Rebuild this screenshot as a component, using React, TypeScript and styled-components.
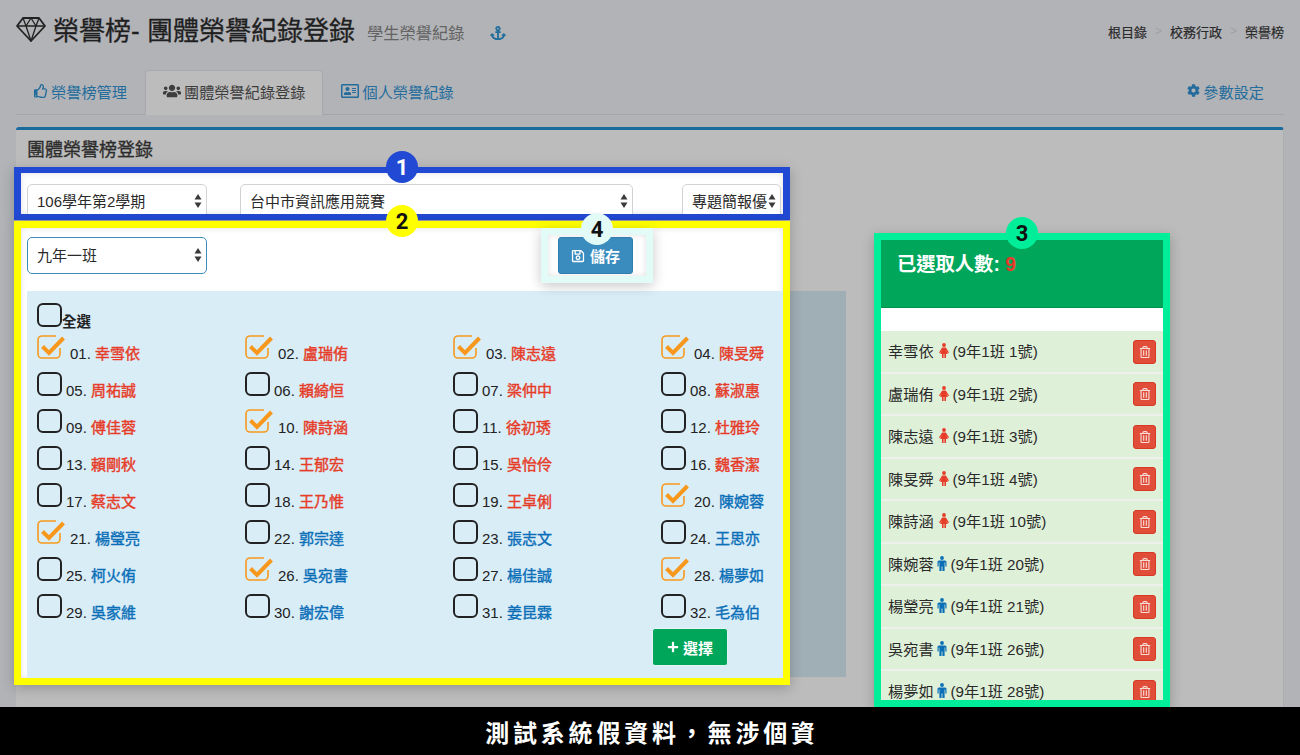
import React from 'react';
import styled, { createGlobalStyle } from 'styled-components';
import {
  FaAnchor,
  FaCog,
  FaPlus,
  FaRegAddressCard,
  FaRegSave,
  FaRegThumbsUp,
  FaRegTrashAlt,
  FaUsers,
} from 'react-icons/fa';

const FONT = '"Liberation Sans", "Noto Sans CJK TC", sans-serif';

const GlobalStyle = createGlobalStyle`
  html, body {
    margin: 0;
    padding: 0;
    height: 755px;
    overflow: hidden;
    background: #b2b3b7;
    font-family: ${FONT};
  }
`;

const Page = styled.div`
  position: relative;
  width: 1300px;
  height: 755px;
  overflow: hidden;
  padding: 0 16px;
  box-sizing: border-box;
`;

const Header = styled.header`
  display: flex;
  align-items: center;
  height: 60px;
`;

const Gem = styled.svg`
  flex: none;
  width: 30px;
  height: 26px;
  margin: -2px 7px 0 0;
`;

const Title = styled.h1`
  margin: -3px 0 0;
  font-size: 26px;
  font-weight: 400;
  color: #1f1f1f;
  white-space: nowrap;
  -webkit-text-stroke: 0.3px #1f1f1f;
`;

const Subtitle = styled.span`
  margin: 4px 0 0 12px;
  font-size: 16.3px;
  color: #636363;
`;

const Anchor = styled(FaAnchor)`
  width: 16px;
  height: 16px;
  margin: 6px 0 0 25px;
  color: #1f6e9c;
`;

const Breadcrumb = styled.nav`
  margin-left: auto;
  display: flex;
  align-items: center;
  font-size: 13px;
  color: #2a2a2a;
  gap: 8px;
  margin-top: 2px;
`;

const Crumb = styled.span`
  -webkit-text-stroke: 0.2px #2a2a2a;
`;

const Sep = styled.span`
  color: #a0a0a2;
  font-size: 12px;
`;

const Tabs = styled.nav`
  display: flex;
  align-items: flex-end;
  height: 55px;
  border-bottom: 1px solid #a3a4a7;
  box-sizing: border-box;
`;

const Tab = styled.div<{ $active?: boolean; $right?: boolean }>`
  display: flex;
  align-items: center;
  gap: 3px;
  height: 45px;
  box-sizing: border-box;
  padding: 0 ${(p) => (p.$right ? 19 : 17)}px 4px 17px;
  margin-bottom: -1px;
  font-size: 15.2px;
  color: ${(p) => (p.$active ? '#3d3d3d' : '#236c9c')};
  background: ${(p) => (p.$active ? '#bcbcbc' : 'transparent')};
  border: 1px solid ${(p) => (p.$active ? '#a8a9ac' : 'transparent')};
  border-bottom-color: ${(p) => (p.$active ? '#bcbcbc' : 'transparent')};
  border-radius: 4px 4px 0 0;
  margin-left: ${(p) => (p.$right ? 'auto' : '0')};
`;

const Box = styled.section`
  margin-top: 12px;
  height: 640px;
  background: #bcbcbc;
  border-top: 3px solid #1b6a9c;
  border-right: 1px solid #adaeb1;
  border-radius: 3px 3px 0 0;
`;

const BoxTitle = styled.h3`
  margin: 0;
  height: 37px;
  padding-left: 11px;
  line-height: 41px;
  font-size: 18px;
  font-weight: 400;
  color: #2c2c2c;
  -webkit-text-stroke: 0.3px #2c2c2c;
`;

const Body = styled.div`
  display: flex;
  align-items: flex-start;
  margin-left: -2px;
`;

const LeftColumn = styled.div`
  width: 776px;
  flex: none;
`;

const Highlight = styled.div<{ $color: string }>`
  position: relative;
  box-sizing: border-box;
  border: 7px solid ${(p) => p.$color};
  background: #fff;
  box-shadow: 0 3px 12px rgba(0, 0, 0, 0.22), inset 0 0 6px rgba(0, 0, 0, 0.12);
`;

const Badge = styled.span<{ $bg: string; $fg: string; $top?: number }>`
  position: absolute;
  top: ${(p) => p.$top ?? -23}px;
  left: 50%;
  width: 32px;
  height: 32px;
  margin-left: -16px;
  border-radius: 50%;
  background: ${(p) => p.$bg};
  color: ${(p) => p.$fg};
  display: flex;
  align-items: center;
  justify-content: center;
  font-family: "Roboto", ${FONT};
  font-size: 22px;
  font-weight: 700;
  z-index: 3;
`;

const FilterSection = styled(Highlight)`
  height: 53px;
  border-bottom-width: 6px;
  border-top-width: 6px;
`;

const FilterClip = styled.div`
  height: 41px;
  overflow: hidden;
  padding: 11px 0 0 6px;
  box-sizing: border-box;
  display: flex;
  gap: 33px;
`;

const SelectBox = styled.div<{ $width: number; $focus?: boolean; $gap?: number }>`
  display: flex;
  align-items: center;
  flex: none;
  width: ${(p) => p.$width}px;
  height: 37px;
  margin-right: ${(p) => p.$gap ?? 0}px;
  box-sizing: border-box;
  padding: 0 4px 2px 9px;
  background: #fff;
  border: 1px solid ${(p) => (p.$focus ? '#3c8dbc' : '#d2d2d6')};
  border-radius: 5px;
  font-size: 15px;
  color: #2a2a2a;
`;

const FilterSelect = styled(SelectBox)`
  padding-bottom: 4px;
`;

const SelectLabel = styled.span`
  flex: 1;
  overflow: hidden;
  white-space: nowrap;
`;

const Arrows = () => (
  <svg width="8" height="16" viewBox="0 0 8 16" style={{ flex: 'none' }}>
    <path d="M4 1 L7.5 6.5 H0.5 Z M4 15 L7.5 9.5 H0.5 Z" fill="#3a3a3a" />
  </svg>
);

const ClassSection = styled(Highlight)`
  margin-top: 1px;
  height: 464px;
`;

const Toolbar = styled.div`
  display: flex;
  align-items: flex-start;
  height: 63px;
  padding-left: 6px;
`;

const ClassSelect = styled(SelectBox)`
  margin-top: 9px;
`;

const SaveHighlight = styled(Highlight)`
  margin-left: 334px;
  width: 112px;
  height: 55px;
  padding: 2px 0 0 10px;
  z-index: 2;
`;

const SaveButton = styled.div`
  display: flex;
  align-items: center;
  justify-content: center;
  gap: 5px;
  width: 75px;
  height: 37px;
  background: #3a8cbf;
  border: 1px solid #2f7eae;
  border-radius: 3px;
  box-sizing: border-box;
  color: #fff;
  font-size: 15px;
  font-weight: 700;
`;

const Roster = styled.div`
  height: 387px;
  box-sizing: border-box;
  margin-left: 6px;
  padding: 12px 0 0 10px;
  background: #d9edf7;
`;

const AllRow = styled.div`
  display: flex;
  height: 32px;
  font-size: 14.5px;
  font-weight: 700;
  color: #222;
`;

const AllLabel = styled.span`
  margin: 10px 0 0 0;
  line-height: 18px;
`;

const RosterGrid = styled.div`
  display: grid;
  grid-template-columns: repeat(4, 208px);
  grid-auto-rows: 37px;
`;

const Cell = styled.div`
  display: flex;
  align-items: flex-start;
  white-space: nowrap;
  font-size: 15px;
  color: #222;
`;

const CellText = styled.span`
  margin: 10px 0 0 4px;
  line-height: 18px;
`;

const Name = styled.span<{ $tone: string }>`
  color: ${(p) => p.$tone};
  -webkit-text-stroke: 0.4px ${(p) => p.$tone};
`;

const PickRow = styled.div`
  margin-top: -3px;
  padding-left: 615px;
`;

const PickButton = styled.div`
  display: flex;
  align-items: center;
  justify-content: center;
  gap: 4px;
  width: 76px;
  height: 38px;
  background: #00a65a;
  border: 1px solid #e4f4f4;
  border-radius: 3px;
  box-sizing: border-box;
  color: #fff;
  font-size: 15px;
  font-weight: 700;
`;

const PanelTail = styled.div`
  flex: none;
  width: 56px;
  height: 386px;
  margin-top: 124px;
  background: #a0aeb6;
`;

const SelectedSection = styled(Highlight)`
  flex: none;
  width: 296px;
  height: 474px;
  margin: 66px 0 0 28px;
`;

const SelectedHead = styled.div`
  height: 68px;
  box-sizing: border-box;
  padding: 12px 16px 0;
  background: #00a65a;
  border-bottom: 1px solid #00924f;
  color: #fff;
  font-size: 19.3px;
  font-weight: 700;
  line-height: 26px;
`;

const Count = styled.span`
  color: #e8392b;
`;

const Spacer = styled.div`
  height: 23px;
  background: #fff;
`;

const SelectedList = styled.div`
  height: 369px;
  overflow: hidden;
`;

const SelectedRow = styled.div`
  display: flex;
  align-items: center;
  height: 40.5px;
  padding: 0 7px;
  background: #dff0d8;
  border-bottom: 2px solid #eef0ec;
  font-size: 15.2px;
  color: #2a2a2a;
`;

const RowText = styled.span`
  display: flex;
  align-items: center;
  margin-top: -2px;
  white-space: pre;
`;

const Figure = styled.svg<{ $female: boolean }>`
  flex: none;
  width: 10px;
  height: 15px;
  margin: 1px 4px 0 ${(p) => (p.$female ? 5 : 3)}px;
`;

const GenderIcon = ({ female }: { female: boolean }) => (
  <Figure viewBox="0 0 10 15" fill={female ? RED : BLUE} $female={female}>
    <circle cx="5" cy="2" r="1.9" />
    {female ? (
      <path d="M3.2 4.4 H6.8 L10 9.4 L9 10.2 L7 7.2 L8.8 11 H7 V15 H5.4 V11 H4.6 V15 H3 V11 H1.2 L3 7.2 L1 10.2 L0 9.4 Z" />
    ) : (
      <path d="M2 4.4 H8 A1.5 1.5 0 0 1 9.5 6 V10.5 H8.3 V6.6 H7.6 V15 H5.4 V10.5 H4.6 V15 H2.4 V6.6 H1.7 V10.5 H0.5 V6 A1.5 1.5 0 0 1 2 4.4 Z" />
    )}
  </Figure>
);

const TrashButton = styled.div`
  margin: 1px 0 0 auto;
  width: 23px;
  height: 24px;
  display: flex;
  align-items: center;
  justify-content: center;
  background: #e04e39;
  border: 1px solid #d73925;
  border-radius: 3px;
  box-sizing: border-box;
  color: #f8dcd8;
  font-size: 12px;
`;

const Notice = styled.div`
  position: absolute;
  left: 0;
  right: 0;
  bottom: 0;
  height: 48px;
  padding-left: 4px;
  background: #000;
  color: #fff;
  display: flex;
  align-items: center;
  justify-content: center;
  font-size: 24px;
  font-weight: 700;
  letter-spacing: 3.8px;
  z-index: 5;
`;

const CheckMark = ({ checked }: { checked: boolean }) =>
  checked ? (
    <svg width="29" height="24" viewBox="0 0 29 24" style={{ flex: 'none' }}>
      <path
        d="M19 1 H5 a4 4 0 0 0 -4 4 V19 a4 4 0 0 0 4 4 H19 a4 4 0 0 0 4 -4 V13"
        fill="none"
        stroke="#f7981d"
        strokeWidth="1.6"
      />
      <path d="M5.5 11.5 L12 18 L26.5 3" fill="none" stroke="#f7981d" strokeWidth="4" />
    </svg>
  ) : (
    <svg width="25" height="24" viewBox="0 0 25 24" style={{ flex: 'none' }}>
      <rect x="1" y="1" width="23" height="22" rx="5" fill="none" stroke="#222" strokeWidth="2" />
    </svg>
  );

const students = [
  '幸雪依', '盧瑞侑', '陳志遠', '陳旻舜', '周祐誠', '賴綺恒', '梁仲中', '蘇淑惠',
  '傅佳蓉', '陳詩涵', '徐初琇', '杜雅玲', '賴剛秋', '王郁宏', '吳怡伶', '魏香潔',
  '蔡志文', '王乃惟', '王卓俐', '陳婉蓉', '楊瑩亮', '郭宗達', '張志文', '王思亦',
  '柯火侑', '吳宛書', '楊佳誠', '楊夢如', '吳家維', '謝宏偉', '姜昆霖', '毛為伯',
];

const picked = [1, 2, 3, 4, 10, 20, 21, 26, 28];
const RED = '#e63c28';
const BLUE = '#0b6fb8';

const App: React.FC = () => (
  <Page>
    <GlobalStyle />
    <Header>
      <Gem viewBox="0 0 30 26" fill="none" stroke="#222" strokeWidth="1.8" strokeLinejoin="round">
        <path d="M7 2 H23 L29 10 L15 25 L1 10 Z" />
        <path d="M1 10 H29 M10 10 L15 25 L20 10 M7 2 L10 10 L15 2 L20 10 L23 2" strokeWidth="1.3" />
      </Gem>
      <Title>榮譽榜- 團體榮譽紀錄登錄</Title>
      <Subtitle>學生榮譽紀錄</Subtitle>
      <Anchor />
      <Breadcrumb>
        <Crumb>根目錄</Crumb>
        <Sep>&gt;</Sep>
        <Crumb>校務行政</Crumb>
        <Sep>&gt;</Sep>
        <Crumb>榮譽榜</Crumb>
      </Breadcrumb>
    </Header>

    <Tabs>
      <Tab>
        <FaRegThumbsUp size={14} />
        榮譽榜管理
      </Tab>
      <Tab $active>
        <FaUsers size={18} />
        團體榮譽紀錄登錄
      </Tab>
      <Tab>
        <FaRegAddressCard size={18} />
        個人榮譽紀錄
      </Tab>
      <Tab $right>
        <FaCog size={13} />
        參數設定
      </Tab>
    </Tabs>

    <Box>
      <BoxTitle>團體榮譽榜登錄</BoxTitle>
      <Body>
        <LeftColumn>
          <FilterSection $color="#2249d4">
            <Badge $bg="#2249d4" $fg="#fff" $top={-22}>1</Badge>
            <FilterClip>
              <FilterSelect $width={180}>
                <SelectLabel>106學年第2學期</SelectLabel>
                <Arrows />
              </FilterSelect>
              <FilterSelect $width={393} $gap={16}>
                <SelectLabel>台中市資訊應用競賽</SelectLabel>
                <Arrows />
              </FilterSelect>
              <FilterSelect $width={99}>
                <SelectLabel>專題簡報優</SelectLabel>
                <Arrows />
              </FilterSelect>
            </FilterClip>
          </FilterSection>

          <ClassSection $color="#ffff00">
            <Badge $bg="#ffff00" $fg="#111">2</Badge>
            <Toolbar>
              <ClassSelect $width={180} $focus>
                <SelectLabel>九年一班</SelectLabel>
                <Arrows />
              </ClassSelect>
              <SaveHighlight $color="#e2fbf6">
                <Badge $bg="#e2fbf6" $fg="#111" $top={-22}>4</Badge>
                <SaveButton>
                  <FaRegSave size={14} />
                  儲存
                </SaveButton>
              </SaveHighlight>
            </Toolbar>
            <Roster>
              <AllRow>
                <CheckMark checked={false} />
                <AllLabel>全選</AllLabel>
              </AllRow>
              <RosterGrid>
                {students.map((name, i) => {
                  const no = i + 1;
                  const checked = picked.includes(no);
                  return (
                    <Cell key={name}>
                      <CheckMark checked={checked} />
                      <CellText>
                        {String(no).padStart(2, '0')}.{' '}
                        <Name $tone={no < 20 ? RED : BLUE}>{name}</Name>
                      </CellText>
                    </Cell>
                  );
                })}
              </RosterGrid>
              <PickRow>
                <PickButton>
                  <FaPlus size={12} />
                  選擇
                </PickButton>
              </PickRow>
            </Roster>
          </ClassSection>
        </LeftColumn>

        <PanelTail />

        <SelectedSection $color="#00ee99">
          <Badge $bg="#00ee99" $fg="#111">3</Badge>
          <SelectedHead>
            已選取人數: <Count>9</Count>
          </SelectedHead>
          <Spacer />
          <SelectedList>
            {picked.map((no) => (
              <SelectedRow key={no}>
                <RowText>
                  {students[no - 1]}
                  <GenderIcon female={no < 20} />
                  (9年1班 {no}號)
                </RowText>
                <TrashButton>
                  <FaRegTrashAlt />
                </TrashButton>
              </SelectedRow>
            ))}
          </SelectedList>
        </SelectedSection>
      </Body>
    </Box>

    <Notice>測試系統假資料，無涉個資</Notice>
  </Page>
);

export default App;
